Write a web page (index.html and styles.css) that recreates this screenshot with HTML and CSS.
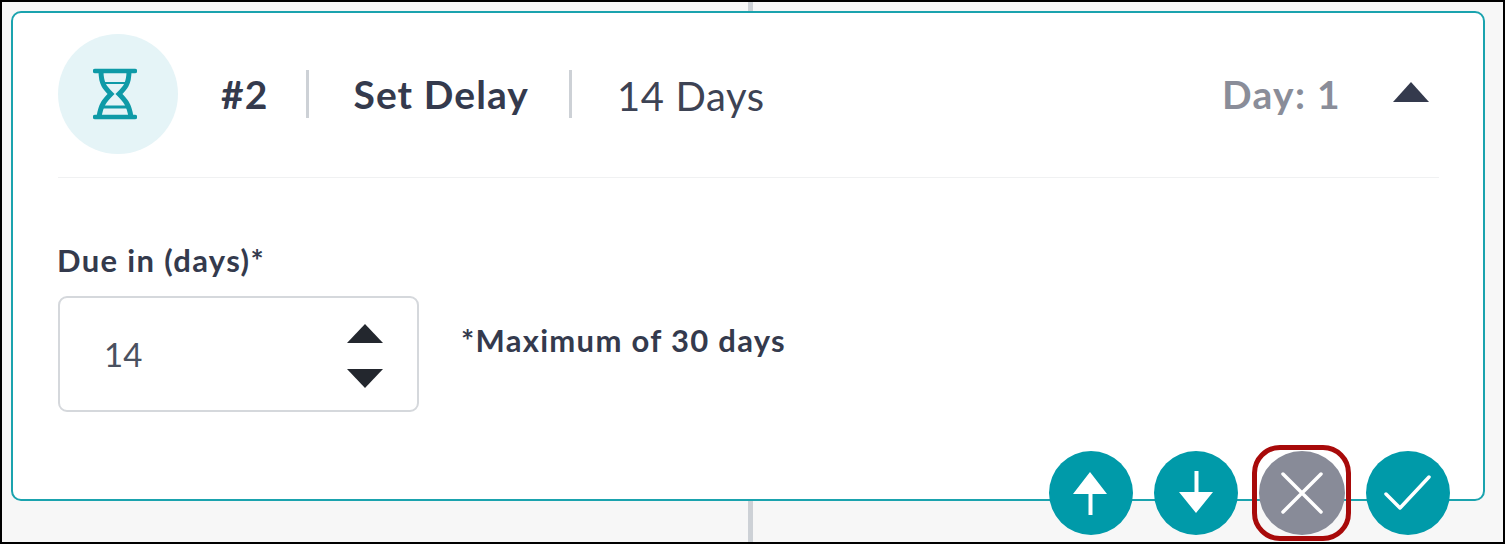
FILE: index.html
```html
<!DOCTYPE html>
<html>
<head>
    <meta charset="UTF-8">
    <meta name="viewport" content="width=device-width">
    <title>Set Delay</title>
    <link rel="stylesheet" href="styles.css">
</head>
<body>
<div class="frame">
    <div class="connector"></div>
    <div class="card">
        <div class="card-head">
            <div class="step-icon">
                <svg width="44" height="52" viewBox="0 0 44 52" fill="none" stroke="#0e9aa7" stroke-width="5">
                    <path d="M2 3H42M2 49H42" stroke-linecap="round" stroke-width="4.5"/>
                    <path d="M8 3C8 16 12 20 18 26C12 32 8 36 6 49M36 3C36 16 32 20 26 26C32 32 36 36 38 49"/>
                    <path d="M12 15H32" stroke-width="2"/>
                    <path d="M10 39H34" stroke-width="3"/>
                </svg>
            </div>
            <span class="step-num">#2</span>
            <span class="sep"></span>
            <span class="step-name">Set Delay</span>
            <span class="sep"></span>
            <span class="step-value">14 Days</span>
            <span class="step-day">Day: 1</span>
            <span class="tri tri-up tri-head"></span>
        </div>
        <label class="field-label">Due in (days)*</label>
        <div class="field-row">
            <div class="num-input">
                <span class="num-value">14</span>
                <span class="spin">
                    <span class="tri tri-up"></span>
                    <span class="tri tri-down"></span>
                </span>
            </div>
            <span class="hint">*Maximum of 30 days</span>
        </div>
    </div>
    <div class="actions">
        <button class="round">
            <svg width="40" height="44" viewBox="0 0 40 44"><path d="M19 1L36 23H21.5V44H17.5V23H2Z" fill="#fff"/></svg>
        </button>
        <button class="round">
            <svg width="40" height="44" viewBox="0 0 40 44"><path d="M20 42L37 21H22.5V0H18.5V21H3Z" fill="#fff"/></svg>
        </button>
        <span class="focus-ring">
            <button class="round grey">
                <svg width="44" height="44" viewBox="0 0 44 44" stroke="#fff" stroke-width="3.5" stroke-linecap="round"><path d="M3 3L41 41M41 3L3 41"/></svg>
            </button>
        </span>
        <button class="round">
            <svg width="50" height="38" viewBox="0 0 50 38" fill="none" stroke="#fff" stroke-width="3.5" stroke-linecap="round" stroke-linejoin="round"><path d="M3 20L17 34L46 3"/></svg>
        </button>
    </div>
</div>
</body>
</html>
```

FILE: styles.css
```css
body {
    margin: 0;
    padding: 0;
    font-family: "Lato", "Noto Sans", sans-serif;
    color: #343a4d;
}

.frame {
    position: relative;
    box-sizing: border-box;
    width: 1505px;
    height: 544px;
    padding: 9px 18px 0 9px;
    background: #f7f7f7;
    border: 2px solid #000;
    overflow: hidden;
}

.connector {
    position: absolute;
    left: 746px;
    top: 0;
    bottom: 0;
    width: 5px;
    background: #cdd1d6;
}

.card {
    position: relative;
    box-sizing: border-box;
    height: 490px;
    padding: 21px 44px 0 45px;
    background: #fff;
    border: 2px solid #1aa3ae;
    border-radius: 10px;
}

.card-head {
    display: flex;
    align-items: center;
    height: 144px;
    padding-bottom: 24px;
    box-sizing: border-box;
    border-bottom: 1px solid #f0f1f2;
}

.step-icon {
    display: flex;
    align-items: center;
    justify-content: center;
    width: 120px;
    height: 120px;
    margin-right: 43px;
    border-radius: 50%;
    background: #e5f4f7;
}

.step-icon svg {
    margin-right: 6px;
}

.step-num, .step-name {
    font-size: 39px;
    font-weight: 700;
    letter-spacing: 1.1px;
}

.sep {
    width: 3px;
    height: 48px;
    margin: 0 44px 0 38px;
    background: #cdd1d6;
}

.step-name + .sep {
    margin: 0 45px 0 40px;
}

.step-value {
    font-size: 40px;
    font-weight: 400;
    letter-spacing: 0.6px;
    color: #3d4354;
    padding-top: 4px;
}

.step-day {
    margin-left: auto;
    margin-right: 52px;
    font-size: 39px;
    font-weight: 700;
    letter-spacing: 1.3px;
    color: #8a8d99;
}

.tri {
    display: block;
    width: 0;
    height: 0;
    border-left: 18.5px solid transparent;
    border-right: 18.5px solid transparent;
}

.tri-up {
    border-bottom: 19px solid #23272e;
}

.tri-down {
    border-top: 19px solid #23272e;
}

.tri-head {
    margin-right: 10px;
    margin-bottom: 4px;
    border-bottom: 20px solid #343a4d;
}

.field-label {
    display: block;
    margin-top: 64px;
    margin-left: -1px;
    font-size: 31px;
    font-weight: 700;
    letter-spacing: 1.35px;
    line-height: 36px;
}

.field-row {
    display: flex;
    align-items: flex-start;
    margin-top: 18px;
}

.num-input {
    display: flex;
    align-items: center;
    justify-content: space-between;
    box-sizing: border-box;
    width: 361px;
    height: 116px;
    padding: 0 34px 0 44px;
    border: 2px solid #d5d8dc;
    border-radius: 9px;
}

.num-value {
    font-size: 33px;
    color: #4a5160;
}

.spin {
    display: flex;
    flex-direction: column;
    gap: 26px;
    padding-top: 3px;
}

.hint {
    margin: 24px 0 0 42px;
    font-size: 31px;
    font-weight: 700;
    letter-spacing: 1.3px;
    line-height: 40px;
}

.actions {
    position: absolute;
    left: 1047px;
    top: 443px;
    display: flex;
    align-items: center;
}

.round {
    display: flex;
    align-items: center;
    justify-content: center;
    width: 84px;
    height: 84px;
    padding: 0;
    border: none;
    border-radius: 50%;
    background: #009aa9;
}

.round.grey {
    flex: none;
    width: 86px;
    height: 84px;
    background: #888b98;
}

.actions > .round:nth-child(2) {
    margin-left: 21px;
}

.focus-ring {
    display: flex;
    align-items: center;
    justify-content: center;
    box-sizing: border-box;
    width: 99px;
    height: 96px;
    margin: 0 15px 0 14px;
    border: 5px solid #a80a0a;
    border-radius: 28px;
}
```
